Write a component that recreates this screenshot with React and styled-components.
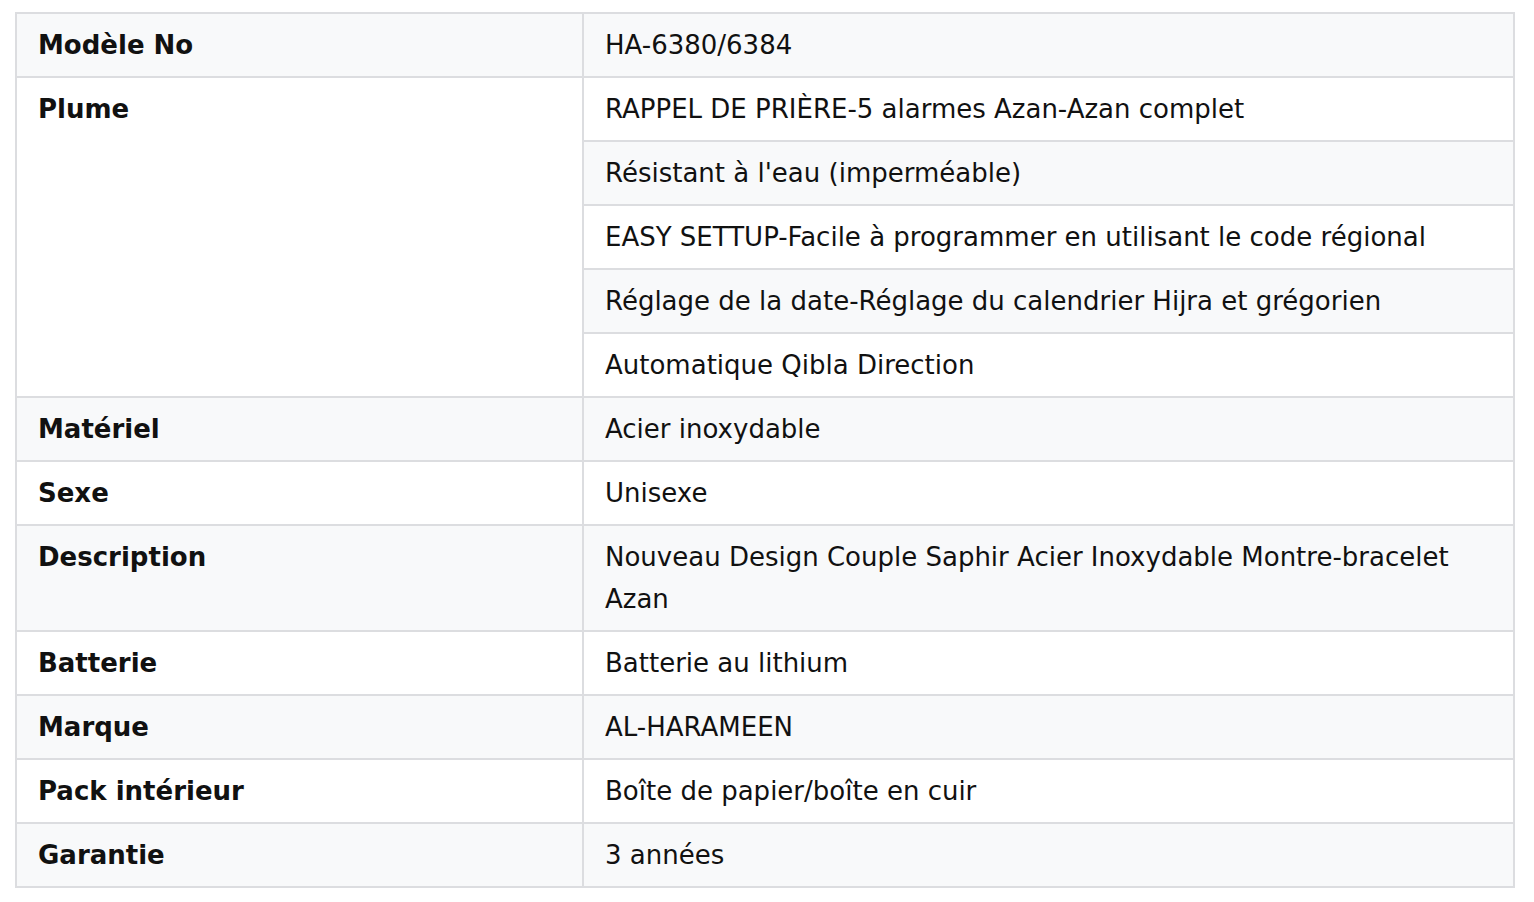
import React from "react";
import styled, { createGlobalStyle } from "styled-components";

const Global = createGlobalStyle`
  body { margin: 0; background: #fff; }
`;
const Wrap = styled.div`
  padding: 12px 15px;
`;
const Table = styled.table`
  width: 1500px;
  border-collapse: collapse;
  font-family: "DejaVu Sans", Verdana, sans-serif;
  font-size: 26px;
  color: #111;
  border: 2px solid #c8ccd1;
`;
const Row = styled.tr`
  background: ${p => (p.$alt ? "#f8f9fa" : "#fff")};
`;
const Cell = styled.td`
  border: 2px solid #dcdde0;
  padding: 10px 21px;
  line-height: 42px;
  vertical-align: top;
  font-weight: ${p => (p.$head ? "bold" : "normal")};
  width: ${p => (p.$head ? "523px" : "auto")};
`;

const plume = [
  "RAPPEL DE PRIÈRE-5 alarmes Azan-Azan complet",
  "Résistant à l'eau (imperméable)",
  "EASY SETTUP-Facile à programmer en utilisant le code régional",
  "Réglage de la date-Réglage du calendrier Hijra et grégorien",
  "Automatique Qibla Direction",
];
const rest = [
  ["Matériel", "Acier inoxydable"],
  ["Sexe", "Unisexe"],
  ["Description", "Nouveau Design Couple Saphir Acier Inoxydable Montre-bracelet Azan"],
  ["Batterie", "Batterie au lithium"],
  ["Marque", "AL-HARAMEEN"],
  ["Pack intérieur", "Boîte de papier/boîte en cuir"],
  ["Garantie", "3 années"],
];

export default function App() {
  return (
    <Wrap>
      <Global />
      <Table>
        <tbody>
          <Row $alt>
            <Cell $head>Modèle No</Cell>
            <Cell>HA-6380/6384</Cell>
          </Row>
          {plume.map((t, i) => (
            <Row key={t} $alt={i % 2 === 1}>
              {i === 0 && (
                <Cell $head rowSpan={5} style={{ background: "#fff" }}>Plume</Cell>
              )}
              <Cell>{t}</Cell>
            </Row>
          ))}
          {rest.map(([k, v], i) => (
            <Row key={k} $alt={i % 2 === 0}>
              <Cell $head>{k}</Cell>
              <Cell>{v}</Cell>
            </Row>
          ))}
        </tbody>
      </Table>
    </Wrap>
  );
}
